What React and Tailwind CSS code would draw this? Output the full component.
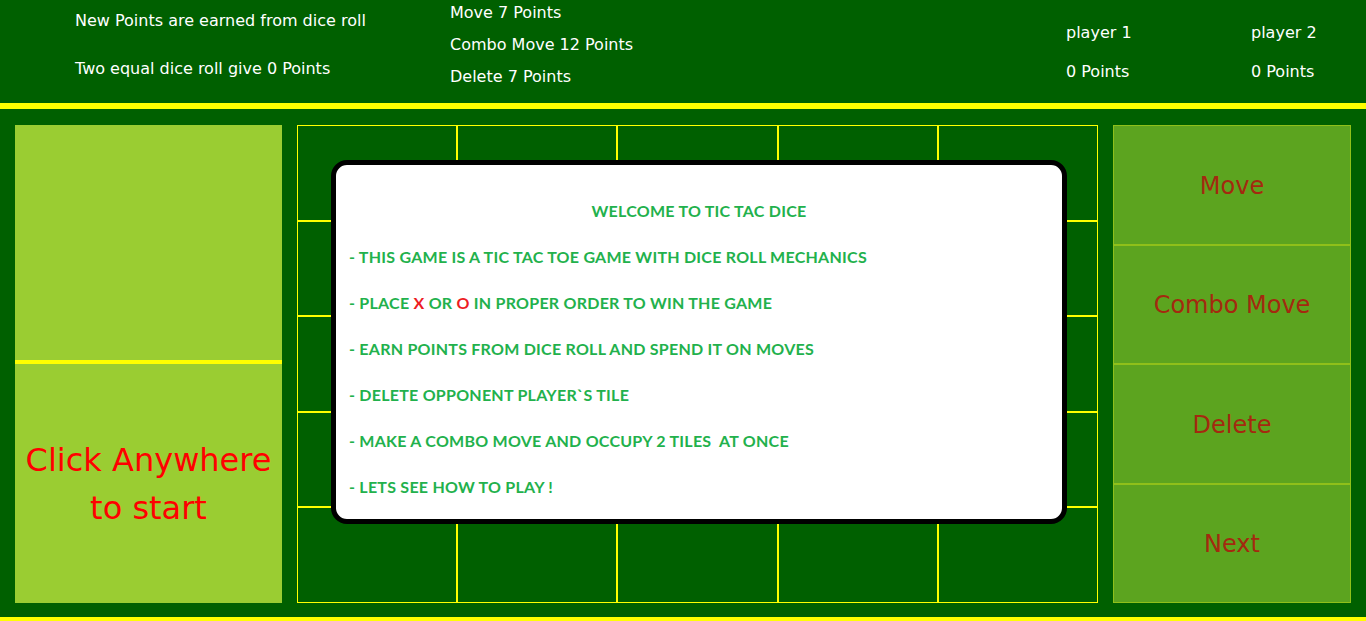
import React from "react";

const verdana = { fontFamily: '"DejaVu Sans", Verdana, sans-serif' };

export default function App() {
  const cells = Array.from({ length: 25 });
  return (
    <div className="w-[1366px] h-[621px] overflow-hidden bg-[#006000] flex flex-col" style={verdana}>
      {/* Header */}
      <div className="h-[103px] flex text-white text-[16px] leading-[20px] shrink-0">
        <div className="w-[450px] pl-[75px] pt-[11px] flex flex-col gap-[28px]">
          <div>New Points are earned from dice roll</div>
          <div>Two equal dice roll give 0 Points</div>
        </div>
        <div className="w-[616px] pt-[3px] flex flex-col gap-[12px]">
          <div>Move 7 Points</div>
          <div>Combo Move 12 Points</div>
          <div>Delete 7 Points</div>
        </div>
        <div className="w-[185px] pt-[23px] flex flex-col gap-[19px]">
          <div>player 1</div>
          <div>0 Points</div>
        </div>
        <div className="pt-[23px] flex flex-col gap-[19px]">
          <div>player 2</div>
          <div>0 Points</div>
        </div>
      </div>
      <div className="h-[6px] bg-[#ffff00] shrink-0" />

      {/* Main */}
      <div className="h-[508px] shrink-0 flex gap-[15px] pl-[15px] pt-[16px]">
        {/* Left panel */}
        <div className="w-[267px] h-[478px] flex flex-col bg-[#9acd32]">
          <div className="h-[235px] border-b-[4px] border-[#ffff00] box-content" />
          <div className="flex-1 flex items-center justify-center text-center text-[#ff0000] text-[32px] leading-[48px]">
            <div>Click Anywhere<br />to start</div>
          </div>
        </div>

        {/* Board */}
        <div className="relative w-[801px] h-[478px] grid grid-cols-5 grid-rows-5">
          {cells.map((_, i) => (
            <div key={i} className="border border-[#ffff00]" />
          ))}
          <div
            className="absolute left-[34px] top-[35px] w-[736px] h-[364px] bg-white border-[5px] border-black rounded-[16px] pl-[13px] pt-[36px] font-bold text-[#22b14c] text-[16px] tracking-[0.25px] leading-[20px] flex flex-col gap-[26px]"
            style={{ fontFamily: 'Lato, "Open Sans", sans-serif' }}
          >
            <div className="text-center pr-[13px]">WELCOME TO TIC TAC DICE</div>
            <div>- THIS GAME IS A TIC TAC TOE GAME WITH DICE ROLL MECHANICS</div>
            <div>
              - PLACE <span className="text-[#ed1c24]">X</span> OR{" "}
              <span className="text-[#ed1c24]">O</span> IN PROPER ORDER TO WIN THE GAME
            </div>
            <div>- EARN POINTS FROM DICE ROLL AND SPEND IT ON MOVES</div>
            <div>- DELETE OPPONENT PLAYER`S TILE</div>
            <div className="whitespace-pre">- MAKE A COMBO MOVE AND OCCUPY 2 TILES  AT ONCE</div>
            <div>- LETS SEE HOW TO PLAY !</div>
          </div>
        </div>

        {/* Right panel */}
        <div className="w-[238px] h-[478px] flex flex-col bg-[#5ca41f] text-[#a4290f] text-[24px]">
          {["Move", "Combo Move", "Delete", "Next"].map((t) => (
            <div key={t} className="flex-1 border border-[#8fc01a] flex items-center justify-center pt-[2px]">
              {t}
            </div>
          ))}
        </div>
      </div>
      <div className="flex-1 bg-[#ffff00]" />
    </div>
  );
}
